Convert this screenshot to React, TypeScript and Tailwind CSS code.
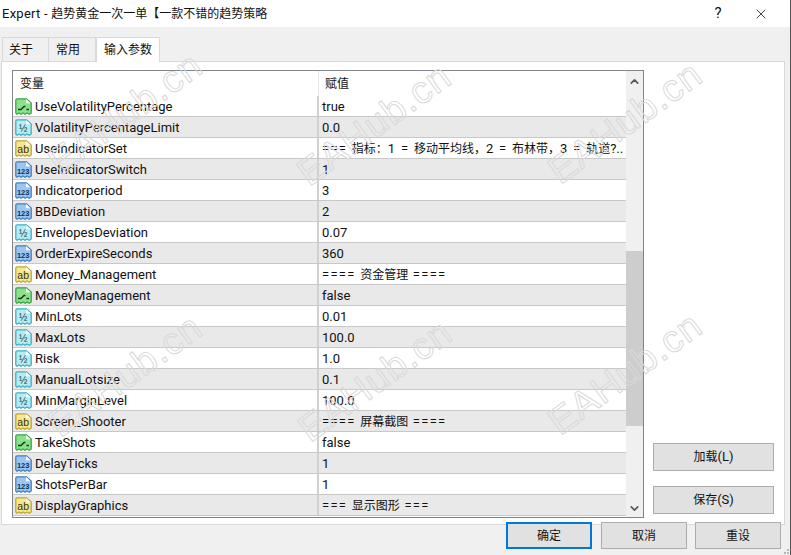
import { ChevronDown, ChevronUp, X } from "lucide-react";

const FONT = "font-['Roboto','Noto_Sans_CJK_SC',sans-serif]";

type Kind = "bool" | "real" | "text" | "int";

const ROWS: { name: string; kind: Kind; value: string }[] = [
  { name: "UseVolatilityPercentage", kind: "bool", value: "true" },
  { name: "VolatilityPercentageLimit", kind: "real", value: "0.0" },
  { name: "UseIndicatorSet", kind: "text", value: "=== 指标：1 = 移动平均线，2 = 布林带，3 = 轨道?.." },
  { name: "UseIndicatorSwitch", kind: "int", value: "1" },
  { name: "Indicatorperiod", kind: "int", value: "3" },
  { name: "BBDeviation", kind: "int", value: "2" },
  { name: "EnvelopesDeviation", kind: "real", value: "0.07" },
  { name: "OrderExpireSeconds", kind: "int", value: "360" },
  { name: "Money_Management", kind: "text", value: "==== 资金管理 ====" },
  { name: "MoneyManagement", kind: "bool", value: "false" },
  { name: "MinLots", kind: "real", value: "0.01" },
  { name: "MaxLots", kind: "real", value: "100.0" },
  { name: "Risk", kind: "real", value: "1.0" },
  { name: "ManualLotsize", kind: "real", value: "0.1" },
  { name: "MinMarginLevel", kind: "real", value: "100.0" },
  { name: "Screen_Shooter", kind: "text", value: "==== 屏幕截图 ====" },
  { name: "TakeShots", kind: "bool", value: "false" },
  { name: "DelayTicks", kind: "int", value: "1" },
  { name: "ShotsPerBar", kind: "int", value: "1" },
  { name: "DisplayGraphics", kind: "text", value: "=== 显示图形 ===" },
];

const ICON_COLORS: Record<Kind, { fill: string; edge: string }> = {
  bool: { fill: "#8fe08c", edge: "#35a845" },
  real: { fill: "#b4ecf2", edge: "#3fb0c2" },
  text: { fill: "#f5e88e", edge: "#bfa43a" },
  int: { fill: "#9cc6ee", edge: "#4480c0" },
};

function TypeIcon({ kind }: { kind: Kind }) {
  const c = ICON_COLORS[kind];
  return (
    <svg width="17" height="17" viewBox="0 0 17 17" className="shrink-0">
      <path
        d="M0.8 2.2 a1.4 1.4 0 0 1 1.4-1.4 H11.5 L16.2 5 V15 L14.2 16.2 L12 15 L10 16.2 L8 15 L6 16.2 L4 15 L2 16.2 L0.8 15 Z"
        fill={c.fill}
        stroke={c.edge}
        strokeWidth="1.3"
      />
      <path d="M11 1.5 H11.6 L15.6 5.2 H11 Z" fill="#ffffff" />
      {kind === "bool" && (
        <path d="M3 11.5 H6 L9 8.5 H10.5 M11.5 11.5 H14" fill="none" stroke="#0f3d1e" strokeWidth="1.4" />
      )}
      {kind === "real" && (
        <text x="8.2" y="12.5" textAnchor="middle" fontSize="10" fontFamily="Liberation Sans" fill="#123f50">
          ½
        </text>
      )}
      {kind === "text" && (
        <text x="8.2" y="12.5" textAnchor="middle" fontSize="10.5" fontFamily="Liberation Sans" fill="#3a300c">
          ab
        </text>
      )}
      {kind === "int" && (
        <text x="8.2" y="12.5" textAnchor="middle" fontSize="7.5" fontWeight="700" fontFamily="Liberation Sans" fill="#0f2f55">
          123
        </text>
      )}
    </svg>
  );
}

// CJK glyphs are 12px in the dialog, latin ones a touch bigger
function Mixed({ text }: { text: string }) {
  const parts = text.split(/([\u3000-\u303f\u4e00-\u9fff\uff00-\uffef]+)/);
  return (
    <>
      {parts.map((part, i) =>
        i % 2 ? (
          <span key={i} className="text-[12px]">
            {part}
          </span>
        ) : (
          <span key={i} className={part.includes("=") ? "tracking-[1.3px]" : ""}>
            {part}
          </span>
        )
      )}
    </>
  );
}

function Watermark({ x, y }: { x: number; y: number }) {
  // free-floating stamp laid over the dialog
  return (
    <div
      className="absolute pointer-events-none -translate-x-1/2 -translate-y-1/2 -rotate-[36deg] text-[38px] leading-none whitespace-nowrap font-['Liberation_Sans',sans-serif] tracking-[1px] text-transparent [-webkit-text-stroke:1px_#d9d9d9]"
      style={{ left: x, top: y }}
    >
      EAHub.cn
    </div>
  );
}

const WATERMARKS = [
  [125, 113],
  [374, 124],
  [625, 122],
  [125, 375],
  [375, 380],
  [625, 373],
];

function DialogButton({ label, className }: { label: string; className: string }) {
  return (
    <button className={`flex items-center justify-center bg-[#e1e1e1] text-[13px] text-[#111] ${className}`}>
      <Mixed text={label} />
    </button>
  );
}

export default function App() {
  return (
    <div className={`relative w-[791px] h-[555px] overflow-hidden flex flex-col bg-[#f0f0f0] border-r border-[#555] text-[13px] text-[#111] ${FONT}`}>
      {/* Title bar */}
      <div className="h-[27px] shrink-0 bg-white flex items-center pl-[2px]">
        <span className="flex-1 truncate">
          <span className="tracking-[0.25px]">Expert - </span>
          <span className="text-[12px]">趋势黄金一次一单【一款不错的趋势策略</span>
        </span>
        <span className="w-[24px] text-center text-[15px] mr-[23px]">?</span>
        <X size={16} strokeWidth={1.2} className="mr-[21px]" />
      </div>

      {/* Tabs */}
      <div className="h-[34px] shrink-0 flex items-end pl-[2px] text-[12px]">
        <div className="w-[47px] h-[24px] flex items-center pl-[6px] bg-[#f0f0f0] border border-b-0 border-[#d9d9d9]">关于</div>
        <div className="w-[47px] h-[24px] flex items-center pl-[7px] bg-[#f0f0f0] border-t border-r border-[#d9d9d9]">常用</div>
        <div className="w-[64px] h-[25px] flex items-center pl-[7px] bg-white border border-b-0 border-[#d9d9d9] relative z-10 -mb-px">输入参数</div>
      </div>

      {/* Tab panel */}
      <div className="ml-[1px] w-[784px] h-[464px] shrink-0 bg-white border border-[#d9d9d9] flex pl-[10px] pt-[8px]">
        <div className="w-[632px] h-[448px] border border-[#7f858a] flex bg-white">
          <div className="w-[613px] flex flex-col overflow-hidden">
            <div className="h-[25px] shrink-0 flex text-[12px]">
              <div className="w-[306px] border-r border-[#e5e5e5] pl-[7px] flex items-center">变量</div>
              <div className="pl-[6px] flex items-center">赋值</div>
            </div>
            {ROWS.map((row, i) => (
              <div key={row.name} className={`h-[21px] shrink-0 flex border-b border-[#c8c8c8] ${i % 2 ? "bg-[#e9e9e9]" : "bg-white"}`}>
                <div className="w-[306px] flex items-center gap-[3px] pl-[2px] border-r-2 border-[#d0d0d0]">
                  <TypeIcon kind={row.kind} />
                  <span className="pt-px">{row.name}</span>
                </div>
                <div className="pl-[3px] pt-px flex items-center whitespace-pre">
                  <span>
                    <Mixed text={row.value} />
                  </span>
                </div>
              </div>
            ))}
          </div>
          {/* Scrollbar */}
          <div className="flex-1 bg-[#f0f0f0] flex flex-col items-center">
            <ChevronUp size={13} strokeWidth={3} className="text-[#555] mt-[4px]" />
            <div className="w-full h-[175px] mt-[163px] bg-[#cdcdcd]" />
            <div className="flex-1" />
            <ChevronDown size={13} strokeWidth={3} className="text-[#555] mb-[2px]" />
          </div>
        </div>
        <div className="ml-[9px] h-[444px] flex flex-col justify-end gap-[15px]">
          <DialogButton label="加载(L)" className="w-[121px] h-[28px] border border-[#adadad]" />
          <DialogButton label="保存(S)" className="w-[121px] h-[28px] border border-[#adadad]" />
        </div>
      </div>

      {/* Footer buttons */}
      <div className="relative -mt-[3px] flex pl-[506px]">
        <DialogButton label="确定" className="w-[86px] h-[27px] border-2 border-[#0078d7]" />
        <DialogButton label="取消" className="ml-[9px] w-[86px] h-[27px] border border-[#adadad]" />
        <DialogButton label="重设" className="ml-[8px] w-[86px] h-[27px] border border-[#adadad]" />
      </div>

      {/* Resize grip */}
      <div className="absolute right-[1px] bottom-[1px] grid grid-cols-2 gap-[1px]">
        <span className="col-start-2 w-[2px] h-[2px] bg-[#b8b8b8]" />
        <span className="w-[2px] h-[2px] bg-[#b8b8b8]" />
        <span className="w-[2px] h-[2px] bg-[#b8b8b8]" />
      </div>

      {WATERMARKS.map(([x, y]) => (
        <Watermark key={`${x}-${y}`} x={x} y={y} />
      ))}
    </div>
  );
}
